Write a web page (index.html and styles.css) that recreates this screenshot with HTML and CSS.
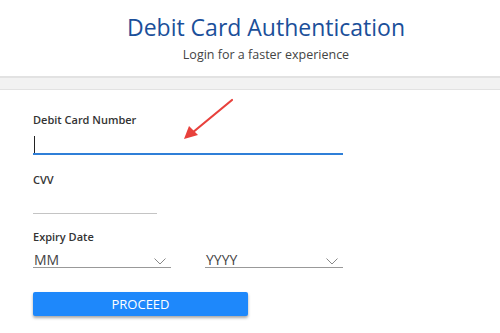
FILE: index.html
```html
<!DOCTYPE html>
<html>
<head>
<meta charset="utf-8">
<link rel="stylesheet" href="styles.css">
</head>
<body>
<header class="head">
  <h1 class="title">Debit Card Authentication</h1>
  <p class="sub">Login for a faster experience</p>
</header>
<div class="band"></div>
<main class="form">
  <svg class="arrow" width="60" height="50" viewBox="0 0 60 50">
    <line x1="52" y1="5" x2="12" y2="38" stroke="#e8413c" stroke-width="2.2" stroke-linecap="round"/>
    <polygon points="4,44 9,31 18,40" fill="#e8413c"/>
  </svg>
  <div class="field">
    <label class="lbl">Debit Card Number</label>
    <div class="input wide focus"><span class="caret"></span></div>
  </div>
  <div class="field">
    <label class="lbl">CVV</label>
    <div class="input cvv"></div>
  </div>
  <div class="field">
    <label class="lbl">Expiry Date</label>
    <div class="selects">
      <div class="select"><span>MM</span>
        <svg class="chev" width="12" height="7" viewBox="0 0 12 7"><polyline points="0.5,0.5 6,6 11.5,0.5" fill="none" stroke="#888" stroke-width="1"/></svg>
      </div>
      <div class="select"><span>YYYY</span>
        <svg class="chev" width="12" height="7" viewBox="0 0 12 7"><polyline points="0.5,0.5 6,6 11.5,0.5" fill="none" stroke="#888" stroke-width="1"/></svg>
      </div>
    </div>
  </div>
  <button class="btn">PROCEED</button>
</main>
</body>
</html>
```
FILE: styles.css
```css
* { box-sizing: border-box; }
html, body { margin: 0; padding: 0; background: #fff; }
body { font-family: "Open Sans", "Noto Sans", sans-serif; color: #333; width: 500px; height: 333px; overflow: hidden; }
.head { height: 76px; text-align: center; padding-top: 12px; }
.title { margin: 0; font-size: 23px; font-weight: 400; color: #1b4f9a; line-height: 30px; padding-left: 32px; }
.sub { margin: 4px 0 0; font-size: 12.5px; color: #444; line-height: 18px; padding-left: 32px; }
.band { height: 14px; background: #f2f2f2; border-top: 2px solid #e2e2e2; border-bottom: 1px solid #e2e2e2; }
.form { position: relative; padding: 22px 0 0 33px; }
.arrow { position: absolute; left: 180px; top: 5px; }
.field { display: flex; flex-direction: column; }
.lbl { font-size: 11px; font-weight: 600; color: #333; line-height: 15px; }
.input { position: relative; }
.wide { width: 310px; }
.focus { border-bottom: 2px solid #2f7fd8; height: 23px; margin-top: 5px; margin-bottom: 17px; }
.caret { position: absolute; left: 1px; top: 4px; width: 1px; height: 17px; background: #222; }
.cvv { width: 124px; height: 27px; border-bottom: 1.5px solid #c4c4c4; margin-bottom: 15px; }
.selects { display: flex; gap: 34px; width: 310px; }
.select { flex: 1; display: flex; justify-content: space-between; align-items: flex-start; height: 24px; border-bottom: 1.5px solid #999; font-size: 14px; color: #444; padding: 0 5px 0 1px; }
.select span { line-height: 17px; margin-top: 7px; }
.chev { margin-top: 14px; }
.btn { margin-top: 24px; width: 215px; height: 24px; border: none; border-radius: 2px; background: #1e88fb; color: #fff; font-family: "Open Sans", sans-serif; font-size: 13px; padding: 0; box-shadow: 0 2px 3px rgba(0,0,0,0.35); display: block; }
```
